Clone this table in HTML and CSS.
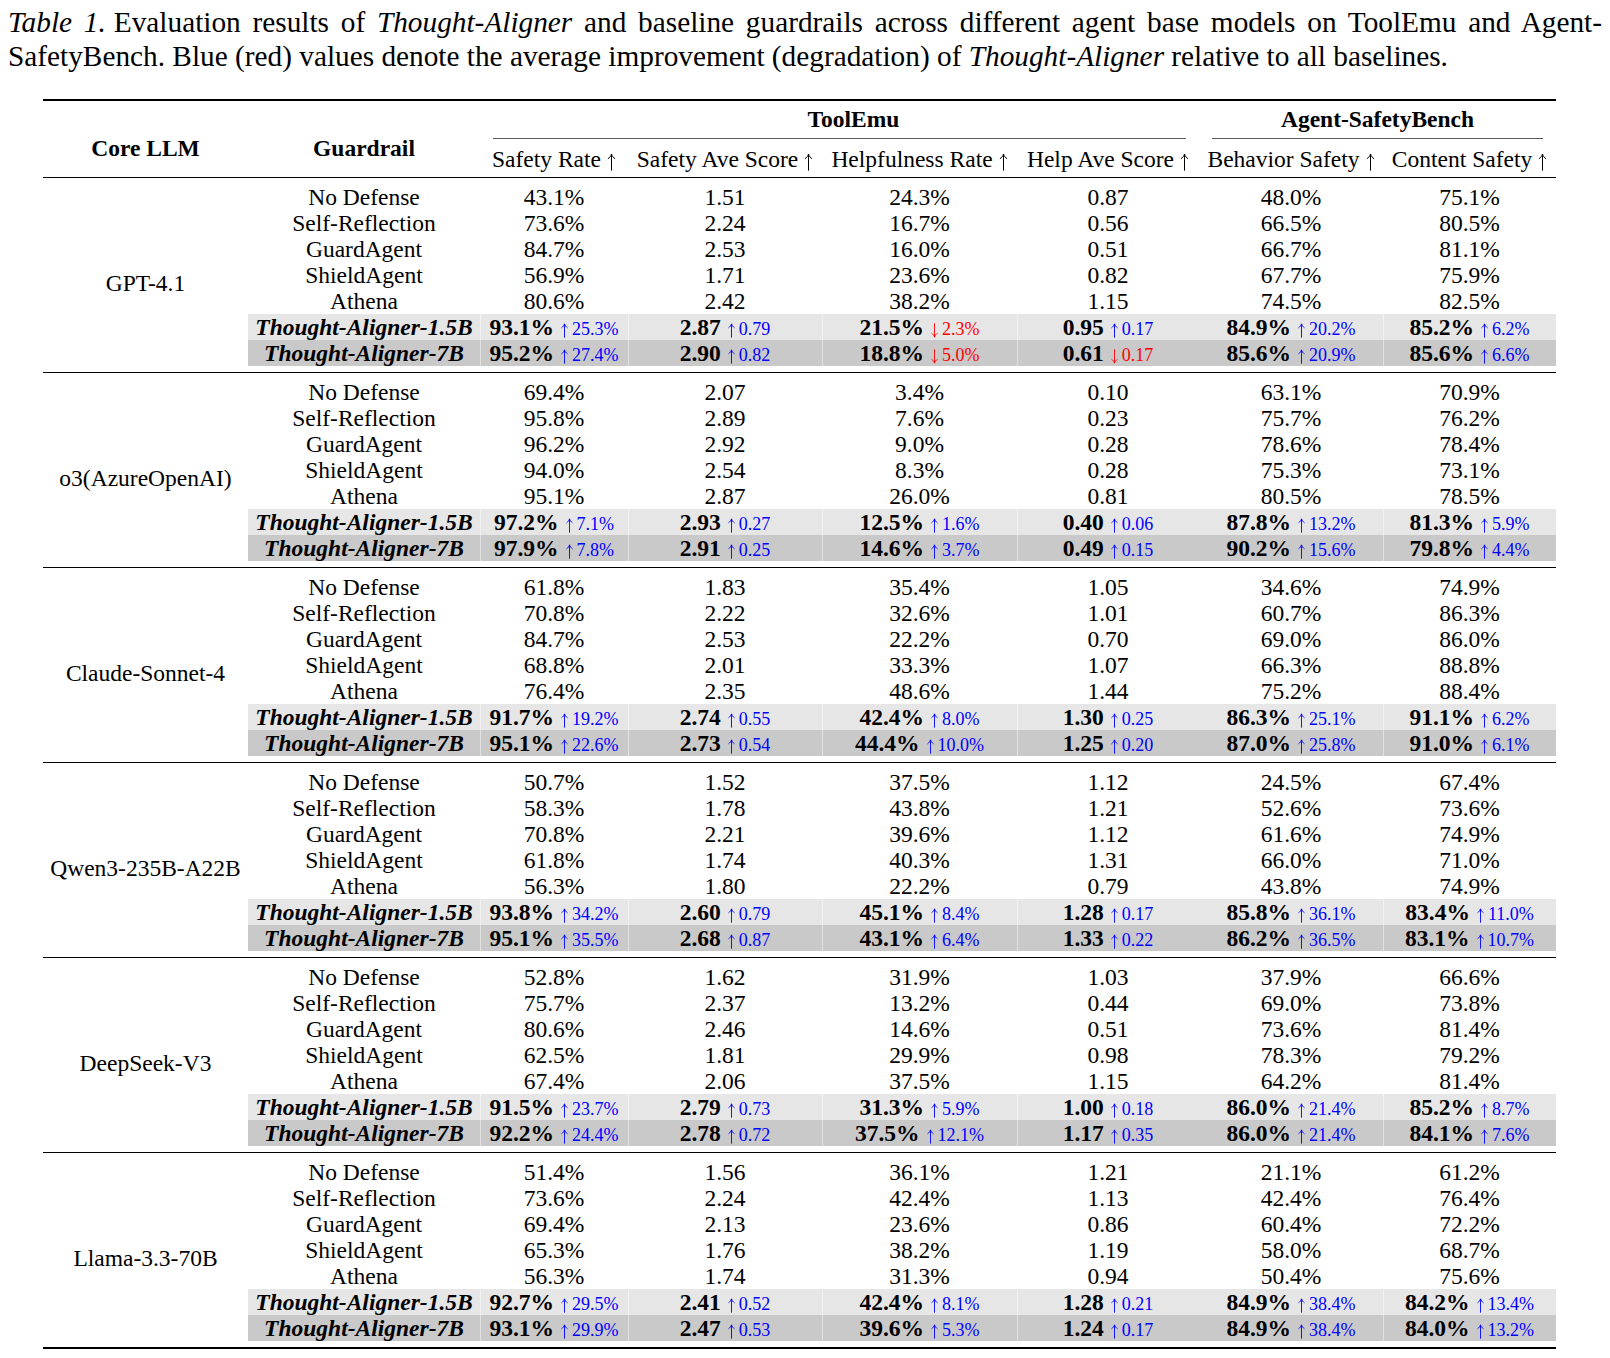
FILE: index.html
```html
<!DOCTYPE html>
<html lang="en">
<head>
<meta charset="utf-8">
<title>Table 1</title>
<link rel="stylesheet" href="styles.css">
</head>
<body>
<svg class="defs" width="0" height="0" aria-hidden="true">
  <defs>
    <symbol id="up" viewBox="0 0 10 20">
      <path d="M5 19.6V1.4M1 6.4C2.9 5.2 4.3 3.6 5 1.1C5.7 3.6 7.1 5.2 9 6.4"/>
    </symbol>
    <symbol id="dn" viewBox="0 0 10 20">
      <path d="M5 0.4V18.6M1 13.6C2.9 14.8 4.3 16.4 5 18.9C5.7 16.4 7.1 14.8 9 13.6"/>
    </symbol>
  </defs>
</svg>

<div class="caption">
  <div class="cap-line1"><i>Table 1.</i><span class="cap-gap"></span>Evaluation results of <i>Thought-Aligner</i> and baseline guardrails across different agent base models on ToolEmu and Agent-</div>
  <div class="cap-line2">SafetyBench. Blue (red) values denote the average improvement (degradation) of <i>Thought-Aligner</i> relative to all baselines.</div>
</div>

<table class="results">
  <colgroup>
    <col class="c-core"><col class="c-guard"><col class="c-sr"><col class="c-sas"><col class="c-hr"><col class="c-has"><col class="c-bs"><col class="c-cs">
  </colgroup>
  <thead>
    <tr class="h1">
      <th rowspan="2" class="span-h">Core LLM</th>
      <th rowspan="2" class="span-h">Guardrail</th>
      <th colspan="4" class="grp-h"><div class="grp-title tool">ToolEmu</div><div class="cmid"></div></th>
      <th colspan="2" class="grp-h"><div class="grp-title">Agent-SafetyBench</div><div class="cmid"></div></th>
    </tr>
    <tr class="h2">
      <th>Safety Rate<svg class="har"><use href="#up"/></svg></th>
      <th>Safety Ave Score<svg class="har"><use href="#up"/></svg></th>
      <th>Helpfulness Rate<svg class="har"><use href="#up"/></svg></th>
      <th>Help Ave Score<svg class="har"><use href="#up"/></svg></th>
      <th>Behavior Safety<svg class="har"><use href="#up"/></svg></th>
      <th>Content Safety<svg class="har"><use href="#up"/></svg></th>
    </tr>
  </thead>

  <tbody class="grp">
    <tr><td rowspan="7" class="core">GPT-4.1</td><td>No Defense</td><td>43.1%</td><td>1.51</td><td>24.3%</td><td>0.87</td><td>48.0%</td><td>75.1%</td></tr>
    <tr><td>Self-Reflection</td><td>73.6%</td><td>2.24</td><td>16.7%</td><td>0.56</td><td>66.5%</td><td>80.5%</td></tr>
    <tr><td>GuardAgent</td><td>84.7%</td><td>2.53</td><td>16.0%</td><td>0.51</td><td>66.7%</td><td>81.1%</td></tr>
    <tr><td>ShieldAgent</td><td>56.9%</td><td>1.71</td><td>23.6%</td><td>0.82</td><td>67.7%</td><td>75.9%</td></tr>
    <tr><td>Athena</td><td>80.6%</td><td>2.42</td><td>38.2%</td><td>1.15</td><td>74.5%</td><td>82.5%</td></tr>
    <tr class="ours s1"><td class="name">Thought-Aligner-1.5B</td><td><b>93.1%</b><span class="d up"><svg class="ar"><use href="#up"/></svg>25.3%</span></td><td><b>2.87</b><span class="d up"><svg class="ar"><use href="#up"/></svg>0.79</span></td><td><b>21.5%</b><span class="d dn"><svg class="ar"><use href="#dn"/></svg>2.3%</span></td><td><b>0.95</b><span class="d up"><svg class="ar"><use href="#up"/></svg>0.17</span></td><td class="nosep"><b>84.9%</b><span class="d up"><svg class="ar"><use href="#up"/></svg>20.2%</span></td><td><b>85.2%</b><span class="d up"><svg class="ar"><use href="#up"/></svg>6.2%</span></td></tr>
    <tr class="ours s2"><td class="name">Thought-Aligner-7B</td><td><b>95.2%</b><span class="d up"><svg class="ar"><use href="#up"/></svg>27.4%</span></td><td><b>2.90</b><span class="d up"><svg class="ar"><use href="#up"/></svg>0.82</span></td><td><b>18.8%</b><span class="d dn"><svg class="ar"><use href="#dn"/></svg>5.0%</span></td><td><b>0.61</b><span class="d dn"><svg class="ar"><use href="#dn"/></svg>0.17</span></td><td class="nosep"><b>85.6%</b><span class="d up"><svg class="ar"><use href="#up"/></svg>20.9%</span></td><td><b>85.6%</b><span class="d up"><svg class="ar"><use href="#up"/></svg>6.6%</span></td></tr>
  </tbody>

  <tbody class="grp">
    <tr><td rowspan="7" class="core">o3(AzureOpenAI)</td><td>No Defense</td><td>69.4%</td><td>2.07</td><td>3.4%</td><td>0.10</td><td>63.1%</td><td>70.9%</td></tr>
    <tr><td>Self-Reflection</td><td>95.8%</td><td>2.89</td><td>7.6%</td><td>0.23</td><td>75.7%</td><td>76.2%</td></tr>
    <tr><td>GuardAgent</td><td>96.2%</td><td>2.92</td><td>9.0%</td><td>0.28</td><td>78.6%</td><td>78.4%</td></tr>
    <tr><td>ShieldAgent</td><td>94.0%</td><td>2.54</td><td>8.3%</td><td>0.28</td><td>75.3%</td><td>73.1%</td></tr>
    <tr><td>Athena</td><td>95.1%</td><td>2.87</td><td>26.0%</td><td>0.81</td><td>80.5%</td><td>78.5%</td></tr>
    <tr class="ours s1"><td class="name">Thought-Aligner-1.5B</td><td><b>97.2%</b><span class="d up"><svg class="ar"><use href="#up"/></svg>7.1%</span></td><td><b>2.93</b><span class="d up"><svg class="ar"><use href="#up"/></svg>0.27</span></td><td><b>12.5%</b><span class="d up"><svg class="ar"><use href="#up"/></svg>1.6%</span></td><td><b>0.40</b><span class="d up"><svg class="ar"><use href="#up"/></svg>0.06</span></td><td class="nosep"><b>87.8%</b><span class="d up"><svg class="ar"><use href="#up"/></svg>13.2%</span></td><td><b>81.3%</b><span class="d up"><svg class="ar"><use href="#up"/></svg>5.9%</span></td></tr>
    <tr class="ours s2"><td class="name">Thought-Aligner-7B</td><td><b>97.9%</b><span class="d up"><svg class="ar"><use href="#up"/></svg>7.8%</span></td><td><b>2.91</b><span class="d up"><svg class="ar"><use href="#up"/></svg>0.25</span></td><td><b>14.6%</b><span class="d up"><svg class="ar"><use href="#up"/></svg>3.7%</span></td><td><b>0.49</b><span class="d up"><svg class="ar"><use href="#up"/></svg>0.15</span></td><td class="nosep"><b>90.2%</b><span class="d up"><svg class="ar"><use href="#up"/></svg>15.6%</span></td><td><b>79.8%</b><span class="d up"><svg class="ar"><use href="#up"/></svg>4.4%</span></td></tr>
  </tbody>

  <tbody class="grp">
    <tr><td rowspan="7" class="core">Claude-Sonnet-4</td><td>No Defense</td><td>61.8%</td><td>1.83</td><td>35.4%</td><td>1.05</td><td>34.6%</td><td>74.9%</td></tr>
    <tr><td>Self-Reflection</td><td>70.8%</td><td>2.22</td><td>32.6%</td><td>1.01</td><td>60.7%</td><td>86.3%</td></tr>
    <tr><td>GuardAgent</td><td>84.7%</td><td>2.53</td><td>22.2%</td><td>0.70</td><td>69.0%</td><td>86.0%</td></tr>
    <tr><td>ShieldAgent</td><td>68.8%</td><td>2.01</td><td>33.3%</td><td>1.07</td><td>66.3%</td><td>88.8%</td></tr>
    <tr><td>Athena</td><td>76.4%</td><td>2.35</td><td>48.6%</td><td>1.44</td><td>75.2%</td><td>88.4%</td></tr>
    <tr class="ours s1"><td class="name">Thought-Aligner-1.5B</td><td><b>91.7%</b><span class="d up"><svg class="ar"><use href="#up"/></svg>19.2%</span></td><td><b>2.74</b><span class="d up"><svg class="ar"><use href="#up"/></svg>0.55</span></td><td><b>42.4%</b><span class="d up"><svg class="ar"><use href="#up"/></svg>8.0%</span></td><td><b>1.30</b><span class="d up"><svg class="ar"><use href="#up"/></svg>0.25</span></td><td class="nosep"><b>86.3%</b><span class="d up"><svg class="ar"><use href="#up"/></svg>25.1%</span></td><td><b>91.1%</b><span class="d up"><svg class="ar"><use href="#up"/></svg>6.2%</span></td></tr>
    <tr class="ours s2"><td class="name">Thought-Aligner-7B</td><td><b>95.1%</b><span class="d up"><svg class="ar"><use href="#up"/></svg>22.6%</span></td><td><b>2.73</b><span class="d up"><svg class="ar"><use href="#up"/></svg>0.54</span></td><td><b>44.4%</b><span class="d up"><svg class="ar"><use href="#up"/></svg>10.0%</span></td><td><b>1.25</b><span class="d up"><svg class="ar"><use href="#up"/></svg>0.20</span></td><td class="nosep"><b>87.0%</b><span class="d up"><svg class="ar"><use href="#up"/></svg>25.8%</span></td><td><b>91.0%</b><span class="d up"><svg class="ar"><use href="#up"/></svg>6.1%</span></td></tr>
  </tbody>

  <tbody class="grp">
    <tr><td rowspan="7" class="core">Qwen3-235B-A22B</td><td>No Defense</td><td>50.7%</td><td>1.52</td><td>37.5%</td><td>1.12</td><td>24.5%</td><td>67.4%</td></tr>
    <tr><td>Self-Reflection</td><td>58.3%</td><td>1.78</td><td>43.8%</td><td>1.21</td><td>52.6%</td><td>73.6%</td></tr>
    <tr><td>GuardAgent</td><td>70.8%</td><td>2.21</td><td>39.6%</td><td>1.12</td><td>61.6%</td><td>74.9%</td></tr>
    <tr><td>ShieldAgent</td><td>61.8%</td><td>1.74</td><td>40.3%</td><td>1.31</td><td>66.0%</td><td>71.0%</td></tr>
    <tr><td>Athena</td><td>56.3%</td><td>1.80</td><td>22.2%</td><td>0.79</td><td>43.8%</td><td>74.9%</td></tr>
    <tr class="ours s1"><td class="name">Thought-Aligner-1.5B</td><td><b>93.8%</b><span class="d up"><svg class="ar"><use href="#up"/></svg>34.2%</span></td><td><b>2.60</b><span class="d up"><svg class="ar"><use href="#up"/></svg>0.79</span></td><td><b>45.1%</b><span class="d up"><svg class="ar"><use href="#up"/></svg>8.4%</span></td><td><b>1.28</b><span class="d up"><svg class="ar"><use href="#up"/></svg>0.17</span></td><td class="nosep"><b>85.8%</b><span class="d up"><svg class="ar"><use href="#up"/></svg>36.1%</span></td><td><b>83.4%</b><span class="d up"><svg class="ar"><use href="#up"/></svg>11.0%</span></td></tr>
    <tr class="ours s2"><td class="name">Thought-Aligner-7B</td><td><b>95.1%</b><span class="d up"><svg class="ar"><use href="#up"/></svg>35.5%</span></td><td><b>2.68</b><span class="d up"><svg class="ar"><use href="#up"/></svg>0.87</span></td><td><b>43.1%</b><span class="d up"><svg class="ar"><use href="#up"/></svg>6.4%</span></td><td><b>1.33</b><span class="d up"><svg class="ar"><use href="#up"/></svg>0.22</span></td><td class="nosep"><b>86.2%</b><span class="d up"><svg class="ar"><use href="#up"/></svg>36.5%</span></td><td><b>83.1%</b><span class="d up"><svg class="ar"><use href="#up"/></svg>10.7%</span></td></tr>
  </tbody>

  <tbody class="grp">
    <tr><td rowspan="7" class="core">DeepSeek-V3</td><td>No Defense</td><td>52.8%</td><td>1.62</td><td>31.9%</td><td>1.03</td><td>37.9%</td><td>66.6%</td></tr>
    <tr><td>Self-Reflection</td><td>75.7%</td><td>2.37</td><td>13.2%</td><td>0.44</td><td>69.0%</td><td>73.8%</td></tr>
    <tr><td>GuardAgent</td><td>80.6%</td><td>2.46</td><td>14.6%</td><td>0.51</td><td>73.6%</td><td>81.4%</td></tr>
    <tr><td>ShieldAgent</td><td>62.5%</td><td>1.81</td><td>29.9%</td><td>0.98</td><td>78.3%</td><td>79.2%</td></tr>
    <tr><td>Athena</td><td>67.4%</td><td>2.06</td><td>37.5%</td><td>1.15</td><td>64.2%</td><td>81.4%</td></tr>
    <tr class="ours s1"><td class="name">Thought-Aligner-1.5B</td><td><b>91.5%</b><span class="d up"><svg class="ar"><use href="#up"/></svg>23.7%</span></td><td><b>2.79</b><span class="d up"><svg class="ar"><use href="#up"/></svg>0.73</span></td><td><b>31.3%</b><span class="d up"><svg class="ar"><use href="#up"/></svg>5.9%</span></td><td><b>1.00</b><span class="d up"><svg class="ar"><use href="#up"/></svg>0.18</span></td><td class="nosep"><b>86.0%</b><span class="d up"><svg class="ar"><use href="#up"/></svg>21.4%</span></td><td><b>85.2%</b><span class="d up"><svg class="ar"><use href="#up"/></svg>8.7%</span></td></tr>
    <tr class="ours s2"><td class="name">Thought-Aligner-7B</td><td><b>92.2%</b><span class="d up"><svg class="ar"><use href="#up"/></svg>24.4%</span></td><td><b>2.78</b><span class="d up"><svg class="ar"><use href="#up"/></svg>0.72</span></td><td><b>37.5%</b><span class="d up"><svg class="ar"><use href="#up"/></svg>12.1%</span></td><td><b>1.17</b><span class="d up"><svg class="ar"><use href="#up"/></svg>0.35</span></td><td class="nosep"><b>86.0%</b><span class="d up"><svg class="ar"><use href="#up"/></svg>21.4%</span></td><td><b>84.1%</b><span class="d up"><svg class="ar"><use href="#up"/></svg>7.6%</span></td></tr>
  </tbody>

  <tbody class="grp">
    <tr><td rowspan="7" class="core">Llama-3.3-70B</td><td>No Defense</td><td>51.4%</td><td>1.56</td><td>36.1%</td><td>1.21</td><td>21.1%</td><td>61.2%</td></tr>
    <tr><td>Self-Reflection</td><td>73.6%</td><td>2.24</td><td>42.4%</td><td>1.13</td><td>42.4%</td><td>76.4%</td></tr>
    <tr><td>GuardAgent</td><td>69.4%</td><td>2.13</td><td>23.6%</td><td>0.86</td><td>60.4%</td><td>72.2%</td></tr>
    <tr><td>ShieldAgent</td><td>65.3%</td><td>1.76</td><td>38.2%</td><td>1.19</td><td>58.0%</td><td>68.7%</td></tr>
    <tr><td>Athena</td><td>56.3%</td><td>1.74</td><td>31.3%</td><td>0.94</td><td>50.4%</td><td>75.6%</td></tr>
    <tr class="ours s1"><td class="name">Thought-Aligner-1.5B</td><td><b>92.7%</b><span class="d up"><svg class="ar"><use href="#up"/></svg>29.5%</span></td><td><b>2.41</b><span class="d up"><svg class="ar"><use href="#up"/></svg>0.52</span></td><td><b>42.4%</b><span class="d up"><svg class="ar"><use href="#up"/></svg>8.1%</span></td><td><b>1.28</b><span class="d up"><svg class="ar"><use href="#up"/></svg>0.21</span></td><td class="nosep"><b>84.9%</b><span class="d up"><svg class="ar"><use href="#up"/></svg>38.4%</span></td><td><b>84.2%</b><span class="d up"><svg class="ar"><use href="#up"/></svg>13.4%</span></td></tr>
    <tr class="ours s2"><td class="name">Thought-Aligner-7B</td><td><b>93.1%</b><span class="d up"><svg class="ar"><use href="#up"/></svg>29.9%</span></td><td><b>2.47</b><span class="d up"><svg class="ar"><use href="#up"/></svg>0.53</span></td><td><b>39.6%</b><span class="d up"><svg class="ar"><use href="#up"/></svg>5.3%</span></td><td><b>1.24</b><span class="d up"><svg class="ar"><use href="#up"/></svg>0.17</span></td><td class="nosep"><b>84.9%</b><span class="d up"><svg class="ar"><use href="#up"/></svg>38.4%</span></td><td><b>84.0%</b><span class="d up"><svg class="ar"><use href="#up"/></svg>13.2%</span></td></tr>
  </tbody>
</table>
</body>
</html>
```

FILE: styles.css
```css
html, body {
  margin: 0;
  background: #ffffff;
}

body {
  padding: 5px 8px 0 8px;
  font-family: "Liberation Serif", "Times New Roman", "DejaVu Serif", serif;
  color: #000000;
}

.defs {
  position: absolute;
  width: 0;
  height: 0;
  overflow: hidden;
}

.caption {
  width: 1594px;
  font-size: 29.3px;
  line-height: 34px;
}

.cap-line1 {
  text-align: justify;
  text-align-last: justify;
  white-space: nowrap;
}

.cap-gap {
  display: inline-block;
  width: 8px;
}

.cap-line2 {
  text-align: left;
}

.results {
  margin: 26px 0 0 35px;
  width: 1513px;
  table-layout: fixed;
  border-collapse: separate;
  border-spacing: 0;
  border-top: 2px solid #000000;
  border-bottom: 2px solid #000000;
  font-size: 23.5px;
  line-height: 26px;
}

.c-core { width: 205px; }
.c-guard { width: 232px; }
.c-sr { width: 148px; }
.c-sas { width: 194px; }
.c-hr { width: 195px; }
.c-has { width: 182px; }
.c-bs { width: 184px; }
.c-cs { width: 173px; }

.results th,
.results td {
  padding: 0;
  text-align: center;
  white-space: nowrap;
}

.results th {
  font-weight: normal;
}

.results th.span-h {
  font-weight: bold;
  vertical-align: top;
  padding-top: 34px;
  border-bottom: 1px solid #000000;
}

.results th.grp-h {
  vertical-align: top;
  padding-top: 5px;
}

.grp-title {
  font-weight: bold;
  height: 26px;
}

.grp-title.tool {
  padding-left: 28px;
}

.cmid {
  margin: 6px 13px 0 13px;
  border-top: 1px solid #5a5a5a;
}

.results .h2 th {
  padding: 7px 0 5px 0;
  border-bottom: 1px solid #000000;
}

.har {
  width: 9px;
  height: 18px;
  margin-left: 6px;
  vertical-align: -4px;
  fill: none;
  stroke: #000000;
  stroke-width: 1.1;
  overflow: visible;
}

.results .grp tr:first-child td {
  padding-top: 6px;
}

.results .grp + .grp tr:first-child td {
  border-top: 1px solid #000000;
}

.results .grp tr:first-child td.core {
  vertical-align: top;
  padding-top: 92px;
}

.s1 td {
  background-color: #e6e6e6;
}

.s2 td {
  background-color: #c9c9c9;
  border-bottom: 6px solid transparent;
  background-clip: padding-box;
}

.ours td + td {
  box-shadow: inset 1px 0 0 rgba(255, 255, 255, 0.45);
}

.ours td.nosep {
  box-shadow: none;
}

.name {
  font-weight: bold;
  font-style: italic;
}

.d {
  margin-left: 6px;
  line-height: 1;
  font-size: 18px;
}

.ar {
  width: 9px;
  height: 15px;
  margin-right: 3px;
  vertical-align: -3px;
  fill: none;
  stroke: currentColor;
  stroke-width: 1.2;
  overflow: visible;
}

.up { color: #0000ff; }
.dn { color: #ff0000; }
```
